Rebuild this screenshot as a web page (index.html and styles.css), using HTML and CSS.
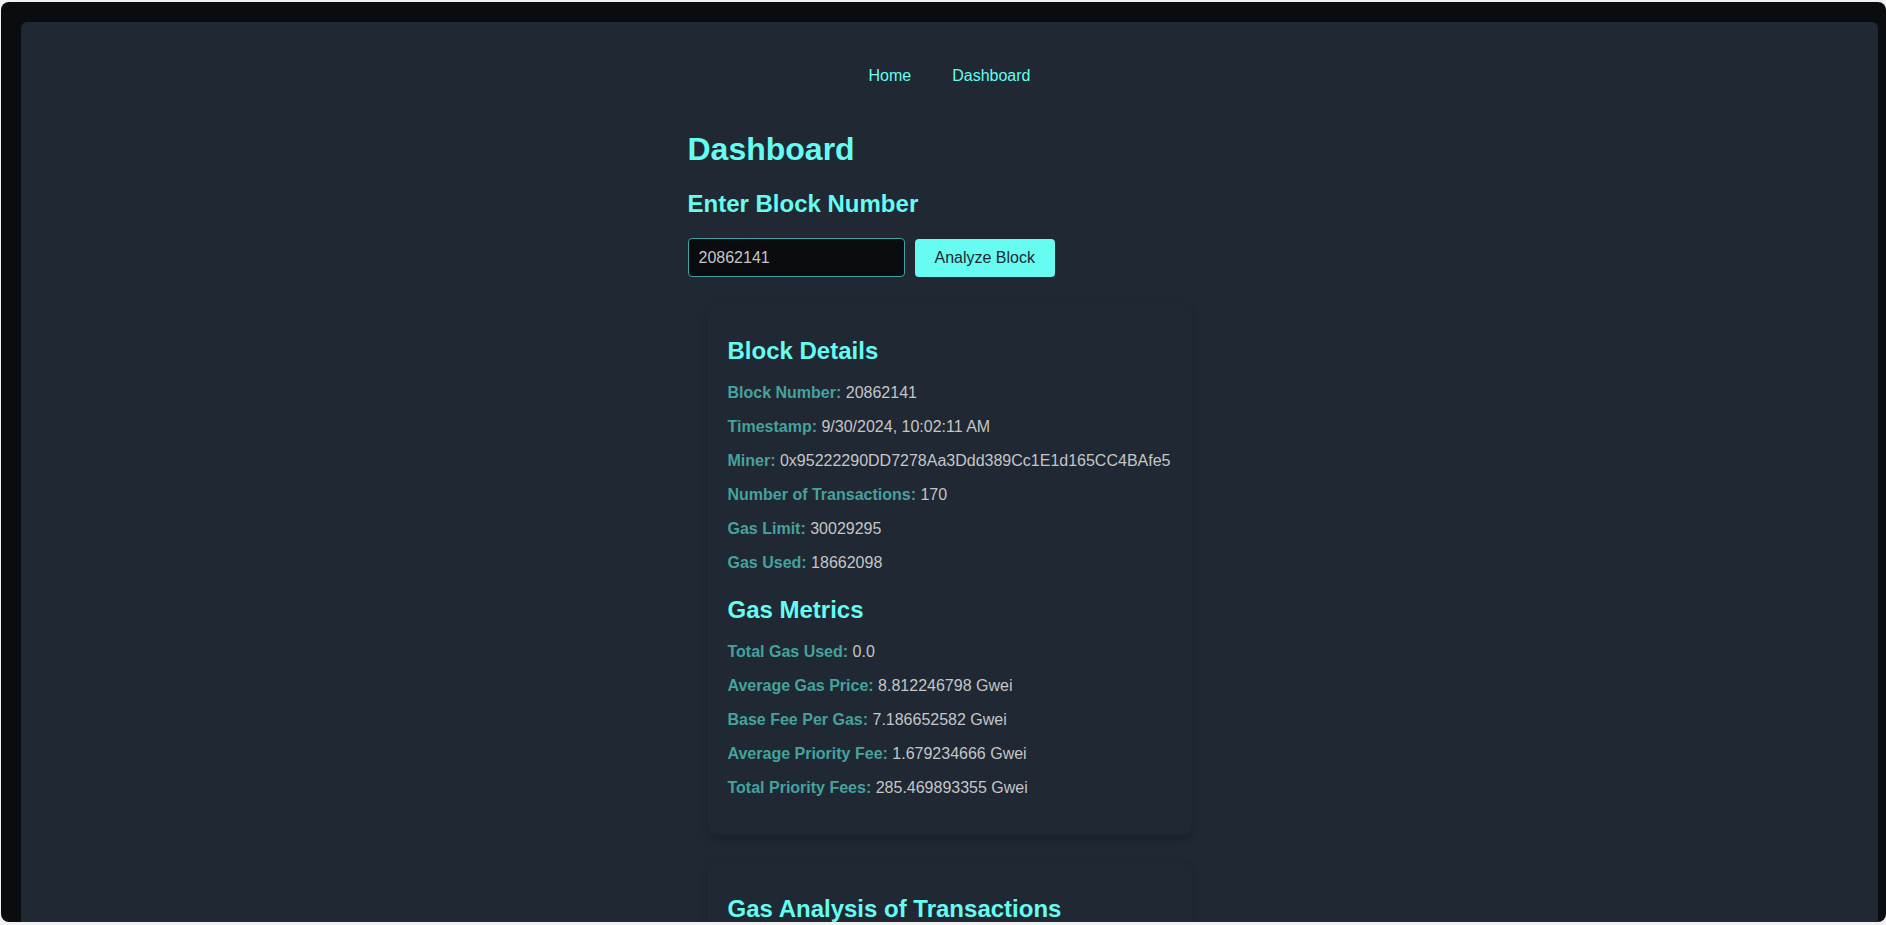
FILE: index.html
```html
<!DOCTYPE html>
<html lang="en">
<head>
<meta charset="utf-8">
<title>Dashboard</title>
<link rel="stylesheet" href="styles.css">
</head>
<body>
<div class="frame">
  <div class="panel">
    <nav class="nav">
      <a class="nav-link" href="#">Home</a>
      <a class="nav-link" href="#">Dashboard</a>
    </nav>
    <main class="container">
      <h1 class="title">Dashboard</h1>
      <h2 class="subtitle">Enter Block Number</h2>
      <div class="form">
        <input class="block-input" type="text" value="20862141">
        <button class="btn" type="button">Analyze Block</button>
      </div>
      <section class="card">
        <h3 class="card-title">Block Details</h3>
        <p class="row"><span class="label">Block Number:</span> 20862141</p>
        <p class="row"><span class="label">Timestamp:</span> 9/30/2024, 10:02:11 AM</p>
        <p class="row"><span class="label">Miner:</span> 0x95222290DD7278Aa3Ddd389Cc1E1d165CC4BAfe5</p>
        <p class="row"><span class="label">Number of Transactions:</span> 170</p>
        <p class="row"><span class="label">Gas Limit:</span> 30029295</p>
        <p class="row"><span class="label">Gas Used:</span> 18662098</p>
        <h3 class="card-title">Gas Metrics</h3>
        <p class="row"><span class="label">Total Gas Used:</span> 0.0</p>
        <p class="row"><span class="label">Average Gas Price:</span> 8.812246798 Gwei</p>
        <p class="row"><span class="label">Base Fee Per Gas:</span> 7.186652582 Gwei</p>
        <p class="row"><span class="label">Average Priority Fee:</span> 1.679234666 Gwei</p>
        <p class="row"><span class="label">Total Priority Fees:</span> 285.469893355 Gwei</p>
      </section>
      <section class="card">
        <h3 class="card-title">Gas Analysis of Transactions</h3>
      </section>
    </main>
  </div>
</div>
</body>
</html>
```

FILE: styles.css
```css
html, body {
  margin: 0;
  padding: 0;
}

body {
  background: #f1f1f1;
  font-family: "Liberation Sans", Arial, sans-serif;
  overflow: hidden;
}

.frame {
  box-sizing: border-box;
  margin: 2px 0 0 1px;
  height: 920px;
  padding: 20px 8px 0 20px;
  background: #0b0c10;
  border-radius: 8px;
}

.panel {
  height: 900px;
  background: #1f2833;
  border-radius: 6px 6px 0 0;
  overflow: hidden;
}

.nav {
  display: flex;
  justify-content: center;
  gap: 41px;
  padding-top: 45px;
}

.nav-link {
  color: #66fcf1;
  text-decoration: none;
  font-size: 16px;
  line-height: 18px;
}

.container {
  width: 524px;
  margin: 0 auto;
}

.title {
  margin: 46px 0 0;
  font-size: 32px;
  line-height: 36px;
  font-weight: bold;
  color: #66fcf1;
}

.subtitle {
  margin: 23px 0 0;
  font-size: 24px;
  line-height: 28px;
  font-weight: bold;
  color: #66fcf1;
}

.form {
  display: flex;
  align-items: flex-end;
  gap: 10px;
  margin-top: 20px;
}

.block-input {
  box-sizing: border-box;
  width: 217px;
  height: 39px;
  padding: 0 10px;
  border: 1px solid #45a29e;
  border-radius: 4px;
  background: #0b0c10;
  color: #c5c6c7;
  font-family: "Liberation Sans", Arial, sans-serif;
  font-size: 16px;
  outline: none;
}

.btn {
  box-sizing: border-box;
  height: 38px;
  padding: 0 20px;
  border: none;
  border-radius: 4px;
  background: #66fcf1;
  color: #1f2833;
  font-family: "Liberation Sans", Arial, sans-serif;
  font-size: 16px;
  cursor: pointer;
}

.card {
  margin: 28px 20px 0;
  padding: 20px 20px 22px;
  background: #1f2833;
  border-radius: 8px;
  box-shadow: 0 4px 8px rgba(0, 0, 0, 0.16);
}

.card-title {
  margin: 24px 0 19px;
  font-size: 24px;
  line-height: 28px;
  font-weight: bold;
  color: #66fcf1;
}

.card-title:first-child {
  margin-top: 12px;
}

.row {
  margin: 16px 0;
  font-size: 16px;
  line-height: 18px;
  color: #c5c6c7;
  white-space: nowrap;
}

.card-title + .row {
  margin-top: 0;
}

.label {
  font-weight: bold;
  color: #45a29e;
}
```
